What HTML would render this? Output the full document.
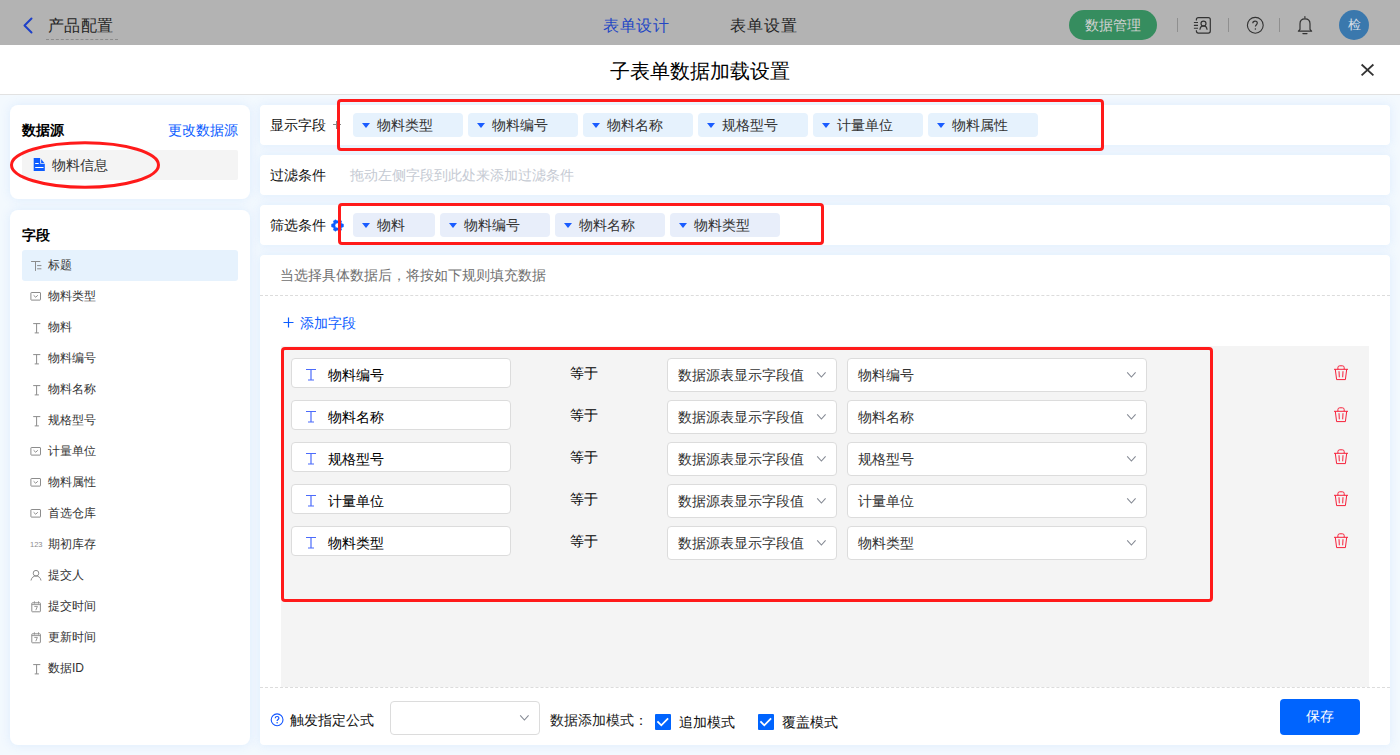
<!DOCTYPE html>
<html><head><meta charset="utf-8">
<style>
*{box-sizing:border-box;margin:0;padding:0}
html,body{width:1400px;height:755px;overflow:hidden}
body{font-family:"Liberation Sans",sans-serif;font-size:14px;color:#333;background:#f3f9fe;position:relative}
.a{position:absolute;white-space:nowrap}
.card{background:#fff;border-radius:8px;box-shadow:0 0 8px 1px rgba(222,236,254,0.9)}
.row{background:#fff;border-radius:4px;box-shadow:0 0 8px 1px rgba(222,236,254,0.9)}
.tag{position:absolute;height:24px;border-radius:4px;background:#e6f2fd;line-height:24px;font-size:14px;color:#333;white-space:nowrap}
.tag i{position:absolute;left:9px;top:10px;width:0;height:0;border-left:4px solid transparent;border-right:4px solid transparent;border-top:5px solid #1a5cff}
.tag span{position:absolute;left:24px;top:0}
.ftag{background:#e8eefa}
.red{position:absolute;border:3px solid #ff1a1a;border-radius:4px}
.box{position:absolute;background:#fff;border:1px solid #dcdcdc;border-radius:4px}
.t14{line-height:20px;font-size:14px}
.li{position:absolute;left:22px;width:216px;height:31px;font-size:12px;line-height:31px;color:#333}
.li svg{position:absolute;left:8px;top:10px}
.li .tx{position:absolute;left:26px;top:0}
</style></head><body>
<div class="a" style="left:0;top:0;width:1400px;height:45px;background:#b3b3b3"></div>
<svg class="a" style="left:22px;top:17px" width="12" height="17" viewBox="0 0 12 17"><path d="M9.5 1.5 L2.5 8.5 L9.5 15.5" fill="none" stroke="#1e40c8" stroke-width="2" stroke-linecap="round" stroke-linejoin="round"/></svg>
<div class="a" style="left:47.5px;top:14px;font-size:16px;line-height:24px;letter-spacing:0.6px;color:#262626">产品配置</div>
<div class="a" style="left:46px;top:39px;width:72px;border-top:1px dashed #8c8c8c"></div>
<div class="a" style="left:603px;top:14px;font-size:16px;line-height:24px;letter-spacing:0.6px;color:#2347c4">表单设计</div>
<div class="a" style="left:730px;top:14px;font-size:16px;line-height:24px;letter-spacing:0.9px;color:#262626">表单设置</div>
<div class="a" style="left:1069px;top:10px;width:88px;height:30px;border-radius:15px;background:#368d5f;color:#d2d2d2;font-size:14px;line-height:30px;text-align:center">数据管理</div>
<div class="a" style="left:1177px;top:18px;width:1px;height:14px;background:#8f8f8f"></div>
<div class="a" style="left:1228px;top:18px;width:1px;height:14px;background:#8f8f8f"></div>
<div class="a" style="left:1279px;top:18px;width:1px;height:14px;background:#8f8f8f"></div>
<svg class="a" style="left:1188px;top:12px" width="132" height="26" viewBox="0 0 132 26"><path d="M8.4 8.6V7.6Q8.4 5.6 10.4 5.6H20.3Q22.3 5.6 22.3 7.6V19.1Q22.3 21.1 20.3 21.1H10.4Q8.4 21.1 8.4 19.1V18.3" fill="none" stroke="#333" stroke-width="1.2"/><path d="M5.9 10.5H10M5.9 13.4H10M5.9 16.2H10" stroke="#333" stroke-width="1.1"/><circle cx="15.5" cy="11.6" r="2.5" fill="none" stroke="#333" stroke-width="1.2"/><path d="M11.9 17.8C12.2 15.2 13.6 13.9 15.5 13.9C17.4 13.9 18.8 15.2 19.1 17.8" fill="none" stroke="#333" stroke-width="1.2"/><circle cx="67.3" cy="13.3" r="7.9" fill="none" stroke="#333" stroke-width="1.1"/><path d="M64.8 11.3C64.8 9.9 65.8 9.1 67.1 9.1C68.4 9.1 69.3 10 69.3 11.1C69.3 12.6 67.4 12.9 67.4 14.6" fill="none" stroke="#333" stroke-width="1.2"/><circle cx="67.4" cy="16.9" r="0.75" fill="#333"/><path d="M110.4 19.2L112 17.4V11.8C112 8.8 114 6.9 117 6.9C120 6.9 122 8.8 122 11.8V17.4L123.6 19.2Z" fill="none" stroke="#333" stroke-width="1.2" stroke-linejoin="round"/><path d="M116.9 4.6V5.8M114.9 21.6H119" stroke="#333" stroke-width="1.2" stroke-linecap="round"/></svg>
<div class="a" style="left:1339px;top:10px;width:30px;height:30px;border-radius:15px;background:#3a78ad;color:#d6dde6;font-size:13px;line-height:30px;text-align:center">检</div>
<div class="a" style="left:0;top:45px;width:1400px;height:50px;background:#fff;border-bottom:1px solid #e2e2e2"></div>
<div class="a" style="left:610px;top:57px;font-size:20px;line-height:28px;color:#000">子表单数据加载设置</div>
<svg class="a" style="left:1359px;top:62px" width="17" height="16" viewBox="0 0 17 16"><path d="M2.6 2.5L14.4 13.4M14.4 2.5L2.6 13.4" stroke="#333" stroke-width="1.8"/></svg>
<div class="a card" style="left:10px;top:105px;width:240px;height:94px"></div>
<div class="a t14" style="left:22px;top:120px;font-weight:bold;color:#000">数据源</div>
<div class="a t14" style="left:168px;top:120px;color:#0b5cff">更改数据源</div>
<div class="a" style="left:22px;top:150px;width:216px;height:30px;background:#f4f4f4;border-radius:2px"></div>
<svg class="a" style="left:33px;top:157px" width="12" height="14" viewBox="0 0 12 14"><path d="M0.7 0.9H7.2V6.7H11.8V14H0.7Z" fill="#0d5cff"/><path d="M8.1 2L11.3 5.9H8.1Z" fill="#0d5cff"/><path d="M2.2 6.5H5.7M2.2 10.5H10.5" stroke="#fff" stroke-width="1.1"/></svg>
<div class="a t14" style="left:52px;top:155px;color:#333">物料信息</div>
<div class="a card" style="left:10px;top:210px;width:240px;height:535px"></div>
<div class="a t14" style="left:22px;top:225px;font-weight:bold;color:#000">字段</div>
<div class="a" style="left:22px;top:250px;width:216px;height:31px;background:#e6f2fd;border-radius:3px"></div>
<div class="li" style="top:250px"><svg width="13" height="12" viewBox="0 0 13 12"><path d="M1.1 1.5H10.3M5.5 1.5V10.9M7.1 5.6H11.4M7.1 8.8H11.4" stroke="#8c8c8c" stroke-width="1" fill="none"/></svg><span class="tx">标题</span></div>
<div class="li" style="top:281px"><svg width="12" height="12" viewBox="0 0 12 12"><rect x="0.9" y="1.5" width="9.6" height="7.6" rx="0.5" stroke="#8c8c8c" stroke-width="1" fill="none"/><path d="M3.6 4.3L5.7 6.2L7.8 4.3" stroke="#8c8c8c" stroke-width="1" fill="none"/></svg><span class="tx">物料类型</span></div>
<div class="li" style="top:312px"><svg width="12" height="12" viewBox="0 0 12 12"><path d="M3.2 1.6H10.3M6.6 1.6V10.9M4.7 10.9H8.9" stroke="#8c8c8c" stroke-width="1" fill="none"/></svg><span class="tx">物料</span></div>
<div class="li" style="top:343px"><svg width="12" height="12" viewBox="0 0 12 12"><path d="M3.2 1.6H10.3M6.6 1.6V10.9M4.7 10.9H8.9" stroke="#8c8c8c" stroke-width="1" fill="none"/></svg><span class="tx">物料编号</span></div>
<div class="li" style="top:374px"><svg width="12" height="12" viewBox="0 0 12 12"><path d="M3.2 1.6H10.3M6.6 1.6V10.9M4.7 10.9H8.9" stroke="#8c8c8c" stroke-width="1" fill="none"/></svg><span class="tx">物料名称</span></div>
<div class="li" style="top:405px"><svg width="12" height="12" viewBox="0 0 12 12"><path d="M3.2 1.6H10.3M6.6 1.6V10.9M4.7 10.9H8.9" stroke="#8c8c8c" stroke-width="1" fill="none"/></svg><span class="tx">规格型号</span></div>
<div class="li" style="top:436px"><svg width="12" height="12" viewBox="0 0 12 12"><rect x="0.9" y="1.5" width="9.6" height="7.6" rx="0.5" stroke="#8c8c8c" stroke-width="1" fill="none"/><path d="M3.6 4.3L5.7 6.2L7.8 4.3" stroke="#8c8c8c" stroke-width="1" fill="none"/></svg><span class="tx">计量单位</span></div>
<div class="li" style="top:467px"><svg width="12" height="12" viewBox="0 0 12 12"><rect x="0.9" y="1.5" width="9.6" height="7.6" rx="0.5" stroke="#8c8c8c" stroke-width="1" fill="none"/><path d="M3.6 4.3L5.7 6.2L7.8 4.3" stroke="#8c8c8c" stroke-width="1" fill="none"/></svg><span class="tx">物料属性</span></div>
<div class="li" style="top:498px"><svg width="12" height="12" viewBox="0 0 12 12"><rect x="0.9" y="1.5" width="9.6" height="7.6" rx="0.5" stroke="#8c8c8c" stroke-width="1" fill="none"/><path d="M3.6 4.3L5.7 6.2L7.8 4.3" stroke="#8c8c8c" stroke-width="1" fill="none"/></svg><span class="tx">首选仓库</span></div>
<div class="li" style="top:529px"><svg width="14" height="12" viewBox="0 0 14 12"><text x="0" y="8" font-size="7.5" font-family="Liberation Sans" fill="#8c8c8c">123</text></svg><span class="tx">期初库存</span></div>
<div class="li" style="top:560px"><svg width="12" height="12" viewBox="0 0 12 12"><circle cx="6" cy="3.2" r="2.8" stroke="#8c8c8c" stroke-width="1" fill="none"/><path d="M1 10.5c0.5-3 2.5-4.5 5-4.5s4.5 1.5 5 4.5" stroke="#8c8c8c" stroke-width="1" fill="none"/></svg><span class="tx">提交人</span></div>
<div class="li" style="top:591px"><svg width="12" height="12" viewBox="0 0 12 12"><rect x="1.8" y="1.8" width="8.6" height="9" rx="0.6" stroke="#8c8c8c" stroke-width="1" fill="none"/><path d="M1.8 3.6H10.4M4.4 0.3V2.6M8.5 0.3V2.6M4.3 5.4H7.4L5.8 9.2" stroke="#8c8c8c" stroke-width="0.9" fill="none"/></svg><span class="tx">提交时间</span></div>
<div class="li" style="top:622px"><svg width="12" height="12" viewBox="0 0 12 12"><rect x="1.8" y="1.8" width="8.6" height="9" rx="0.6" stroke="#8c8c8c" stroke-width="1" fill="none"/><path d="M1.8 3.6H10.4M4.4 0.3V2.6M8.5 0.3V2.6M4.3 5.4H7.4L5.8 9.2" stroke="#8c8c8c" stroke-width="0.9" fill="none"/></svg><span class="tx">更新时间</span></div>
<div class="li" style="top:653px"><svg width="12" height="12" viewBox="0 0 12 12"><path d="M3.2 1.6H10.3M6.6 1.6V10.9M4.7 10.9H8.9" stroke="#8c8c8c" stroke-width="1" fill="none"/></svg><span class="tx">数据ID</span></div>
<div class="a row" style="left:260px;top:105px;width:1130px;height:40px"></div>
<div class="a row" style="left:260px;top:155px;width:1130px;height:40px"></div>
<div class="a row" style="left:260px;top:205px;width:1130px;height:40px"></div>
<div class="a t14" style="left:270px;top:115px;color:#111">显示字段</div>
<div class="a" style="left:333px;top:124px;width:8px;height:1px;background:#888"></div>
<div class="a" style="left:336px;top:121px;width:1px;height:8px;background:#888"></div>
<div class="a t14" style="left:270px;top:165px;color:#111">过滤条件</div>
<div class="a t14" style="left:350px;top:165px;color:#c5cad3">拖动左侧字段到此处来添加过滤条件</div>
<div class="a t14" style="left:270px;top:215px;color:#111">筛选条件</div>
<svg class="a" style="left:330.2px;top:217.6px" width="15" height="15" viewBox="0 0 15 15"><path d="M13.44 6.13L13.44 8.87L11.86 9.26L11.20 10.39L11.66 11.96L9.28 13.33L8.15 12.15L6.85 12.15L5.72 13.33L3.34 11.96L3.80 10.39L3.14 9.26L1.56 8.87L1.56 6.13L3.14 5.74L3.80 4.61L3.34 3.04L5.72 1.67L6.85 2.85L8.15 2.85L9.28 1.67L11.66 3.04L11.20 4.61L11.86 5.74ZM10.00 7.5A2.5 2.5 0 1 0 5.00 7.5A2.5 2.5 0 1 0 10.00 7.5Z" fill="#0d5cff" fill-rule="evenodd" stroke="#0d5cff" stroke-width="0.5" stroke-linejoin="round"/></svg>
<div class="tag" style="left:353px;top:113px;width:110px"><i></i><span>物料类型</span></div>
<div class="tag" style="left:468px;top:113px;width:110px"><i></i><span>物料编号</span></div>
<div class="tag" style="left:583px;top:113px;width:110px"><i></i><span>物料名称</span></div>
<div class="tag" style="left:698px;top:113px;width:110px"><i></i><span>规格型号</span></div>
<div class="tag" style="left:813px;top:113px;width:110px"><i></i><span>计量单位</span></div>
<div class="tag" style="left:928px;top:113px;width:110px"><i></i><span>物料属性</span></div>
<div class="tag ftag" style="left:353px;top:213px;width:82px"><i></i><span>物料</span></div>
<div class="tag ftag" style="left:440px;top:213px;width:110px"><i></i><span>物料编号</span></div>
<div class="tag ftag" style="left:555px;top:213px;width:110px"><i></i><span>物料名称</span></div>
<div class="tag ftag" style="left:670px;top:213px;width:110px"><i></i><span>物料类型</span></div>
<div class="a card" style="left:260px;top:255px;width:1130px;height:490px;border-radius:4px"></div>
<div class="a t14" style="left:280px;top:265px;color:#707070">当选择具体数据后，将按如下规则填充数据</div>
<div class="a" style="left:260px;top:295px;width:1130px;border-top:1px dashed #dcdcdc"></div>
<svg class="a" style="left:283px;top:317px" width="11" height="11" viewBox="0 0 11 11"><path d="M5.5 0.5v10M0.5 5.5h10" stroke="#0b5cff" stroke-width="1.2"/></svg>
<div class="a t14" style="left:300px;top:313px;color:#0b5cff">添加字段</div>
<div class="a" style="left:281px;top:346px;width:1088px;height:341px;background:#f4f4f4"></div>
<div class="a" style="left:260px;top:687px;width:1130px;border-top:1px dashed #dcdcdc"></div>
<div class="box" style="left:291px;top:358px;width:220px;height:30px"></div>
<svg class="a" style="left:305px;top:368px" width="12" height="13" viewBox="0 0 12 13"><path d="M1 1.5h10M6 1.5v10.5M3 12h6" stroke="#4b6bfb" stroke-width="1.2" fill="none"/></svg>
<div class="a t14" style="left:328px;top:365px;color:#000">物料编号</div>
<div class="a t14" style="left:570px;top:363px;color:#000">等于</div>
<div class="box" style="left:667px;top:358px;width:170px;height:34px"></div>
<div class="a t14" style="left:678px;top:365px;color:#333">数据源表显示字段值</div>
<svg class="a" style="left:816px;top:371px" width="11" height="7" viewBox="0 0 11 7"><path d="M1.2 1.3L5.4 6L9.6 1.3" stroke="#858a94" stroke-width="1.1" fill="none"/></svg>
<div class="box" style="left:847px;top:358px;width:300px;height:34px"></div>
<div class="a t14" style="left:858px;top:365px;color:#333">物料编号</div>
<svg class="a" style="left:1126px;top:371px" width="11" height="7" viewBox="0 0 11 7"><path d="M1.2 1.3L5.4 6L9.6 1.3" stroke="#858a94" stroke-width="1.1" fill="none"/></svg>
<svg class="a" style="left:1334px;top:365px" width="15" height="16" viewBox="0 0 15 16"><path d="M0 4.3H14M3.9 4.3V2.6Q3.9 0.8 5.7 0.8H8.4Q10.2 0.8 10.2 2.6V4.3M1.3 4.3L2.6 14.6H11.4L12.7 4.3M5 6.2L5.3 12.3M9 6.2L8.7 12.3" stroke="#f7203a" stroke-width="1" fill="none"/></svg>
<div class="box" style="left:291px;top:400px;width:220px;height:30px"></div>
<svg class="a" style="left:305px;top:410px" width="12" height="13" viewBox="0 0 12 13"><path d="M1 1.5h10M6 1.5v10.5M3 12h6" stroke="#4b6bfb" stroke-width="1.2" fill="none"/></svg>
<div class="a t14" style="left:328px;top:407px;color:#000">物料名称</div>
<div class="a t14" style="left:570px;top:405px;color:#000">等于</div>
<div class="box" style="left:667px;top:400px;width:170px;height:34px"></div>
<div class="a t14" style="left:678px;top:407px;color:#333">数据源表显示字段值</div>
<svg class="a" style="left:816px;top:413px" width="11" height="7" viewBox="0 0 11 7"><path d="M1.2 1.3L5.4 6L9.6 1.3" stroke="#858a94" stroke-width="1.1" fill="none"/></svg>
<div class="box" style="left:847px;top:400px;width:300px;height:34px"></div>
<div class="a t14" style="left:858px;top:407px;color:#333">物料名称</div>
<svg class="a" style="left:1126px;top:413px" width="11" height="7" viewBox="0 0 11 7"><path d="M1.2 1.3L5.4 6L9.6 1.3" stroke="#858a94" stroke-width="1.1" fill="none"/></svg>
<svg class="a" style="left:1334px;top:407px" width="15" height="16" viewBox="0 0 15 16"><path d="M0 4.3H14M3.9 4.3V2.6Q3.9 0.8 5.7 0.8H8.4Q10.2 0.8 10.2 2.6V4.3M1.3 4.3L2.6 14.6H11.4L12.7 4.3M5 6.2L5.3 12.3M9 6.2L8.7 12.3" stroke="#f7203a" stroke-width="1" fill="none"/></svg>
<div class="box" style="left:291px;top:442px;width:220px;height:30px"></div>
<svg class="a" style="left:305px;top:452px" width="12" height="13" viewBox="0 0 12 13"><path d="M1 1.5h10M6 1.5v10.5M3 12h6" stroke="#4b6bfb" stroke-width="1.2" fill="none"/></svg>
<div class="a t14" style="left:328px;top:449px;color:#000">规格型号</div>
<div class="a t14" style="left:570px;top:447px;color:#000">等于</div>
<div class="box" style="left:667px;top:442px;width:170px;height:34px"></div>
<div class="a t14" style="left:678px;top:449px;color:#333">数据源表显示字段值</div>
<svg class="a" style="left:816px;top:455px" width="11" height="7" viewBox="0 0 11 7"><path d="M1.2 1.3L5.4 6L9.6 1.3" stroke="#858a94" stroke-width="1.1" fill="none"/></svg>
<div class="box" style="left:847px;top:442px;width:300px;height:34px"></div>
<div class="a t14" style="left:858px;top:449px;color:#333">规格型号</div>
<svg class="a" style="left:1126px;top:455px" width="11" height="7" viewBox="0 0 11 7"><path d="M1.2 1.3L5.4 6L9.6 1.3" stroke="#858a94" stroke-width="1.1" fill="none"/></svg>
<svg class="a" style="left:1334px;top:449px" width="15" height="16" viewBox="0 0 15 16"><path d="M0 4.3H14M3.9 4.3V2.6Q3.9 0.8 5.7 0.8H8.4Q10.2 0.8 10.2 2.6V4.3M1.3 4.3L2.6 14.6H11.4L12.7 4.3M5 6.2L5.3 12.3M9 6.2L8.7 12.3" stroke="#f7203a" stroke-width="1" fill="none"/></svg>
<div class="box" style="left:291px;top:484px;width:220px;height:30px"></div>
<svg class="a" style="left:305px;top:494px" width="12" height="13" viewBox="0 0 12 13"><path d="M1 1.5h10M6 1.5v10.5M3 12h6" stroke="#4b6bfb" stroke-width="1.2" fill="none"/></svg>
<div class="a t14" style="left:328px;top:491px;color:#000">计量单位</div>
<div class="a t14" style="left:570px;top:489px;color:#000">等于</div>
<div class="box" style="left:667px;top:484px;width:170px;height:34px"></div>
<div class="a t14" style="left:678px;top:491px;color:#333">数据源表显示字段值</div>
<svg class="a" style="left:816px;top:497px" width="11" height="7" viewBox="0 0 11 7"><path d="M1.2 1.3L5.4 6L9.6 1.3" stroke="#858a94" stroke-width="1.1" fill="none"/></svg>
<div class="box" style="left:847px;top:484px;width:300px;height:34px"></div>
<div class="a t14" style="left:858px;top:491px;color:#333">计量单位</div>
<svg class="a" style="left:1126px;top:497px" width="11" height="7" viewBox="0 0 11 7"><path d="M1.2 1.3L5.4 6L9.6 1.3" stroke="#858a94" stroke-width="1.1" fill="none"/></svg>
<svg class="a" style="left:1334px;top:491px" width="15" height="16" viewBox="0 0 15 16"><path d="M0 4.3H14M3.9 4.3V2.6Q3.9 0.8 5.7 0.8H8.4Q10.2 0.8 10.2 2.6V4.3M1.3 4.3L2.6 14.6H11.4L12.7 4.3M5 6.2L5.3 12.3M9 6.2L8.7 12.3" stroke="#f7203a" stroke-width="1" fill="none"/></svg>
<div class="box" style="left:291px;top:526px;width:220px;height:30px"></div>
<svg class="a" style="left:305px;top:536px" width="12" height="13" viewBox="0 0 12 13"><path d="M1 1.5h10M6 1.5v10.5M3 12h6" stroke="#4b6bfb" stroke-width="1.2" fill="none"/></svg>
<div class="a t14" style="left:328px;top:533px;color:#000">物料类型</div>
<div class="a t14" style="left:570px;top:531px;color:#000">等于</div>
<div class="box" style="left:667px;top:526px;width:170px;height:34px"></div>
<div class="a t14" style="left:678px;top:533px;color:#333">数据源表显示字段值</div>
<svg class="a" style="left:816px;top:539px" width="11" height="7" viewBox="0 0 11 7"><path d="M1.2 1.3L5.4 6L9.6 1.3" stroke="#858a94" stroke-width="1.1" fill="none"/></svg>
<div class="box" style="left:847px;top:526px;width:300px;height:34px"></div>
<div class="a t14" style="left:858px;top:533px;color:#333">物料类型</div>
<svg class="a" style="left:1126px;top:539px" width="11" height="7" viewBox="0 0 11 7"><path d="M1.2 1.3L5.4 6L9.6 1.3" stroke="#858a94" stroke-width="1.1" fill="none"/></svg>
<svg class="a" style="left:1334px;top:533px" width="15" height="16" viewBox="0 0 15 16"><path d="M0 4.3H14M3.9 4.3V2.6Q3.9 0.8 5.7 0.8H8.4Q10.2 0.8 10.2 2.6V4.3M1.3 4.3L2.6 14.6H11.4L12.7 4.3M5 6.2L5.3 12.3M9 6.2L8.7 12.3" stroke="#f7203a" stroke-width="1" fill="none"/></svg>
<svg class="a" style="left:270px;top:712.5px" width="15" height="15" viewBox="0 0 15 15"><circle cx="7.1" cy="6.8" r="5.9" stroke="#1256ff" stroke-width="1.1" fill="none"/><path d="M5.2 5.3C5.2 4.2 6 3.5 7.1 3.5C8.2 3.5 8.9 4.2 8.9 5.1C8.9 6.4 7.1 6.5 7.1 8" stroke="#1256ff" stroke-width="1.2" fill="none"/><circle cx="7.1" cy="9.7" r="0.75" fill="#1256ff"/></svg>
<div class="a t14" style="left:290px;top:710px;color:#111">触发指定公式</div>
<div class="box" style="left:390px;top:701px;width:150px;height:34px"></div>
<svg class="a" style="left:519px;top:714px" width="11" height="7" viewBox="0 0 11 7"><path d="M1.2 1.3L5.4 6L9.6 1.3" stroke="#858a94" stroke-width="1.1" fill="none"/></svg>
<div class="a t14" style="left:550px;top:710px;color:#222">数据添加模式：</div>
<div class="a" style="left:655px;top:714px;width:16px;height:16px;background:#0064fe;border-radius:1px"></div><svg class="a" style="left:655px;top:714px" width="16" height="16" viewBox="0 0 16 16"><path d="M2.4 7.3L6.3 11.3L13.1 4.3" stroke="#fff" stroke-width="1.8" fill="none"/></svg>
<div class="a t14" style="left:679px;top:712px;color:#111">追加模式</div>
<div class="a" style="left:758px;top:714px;width:16px;height:16px;background:#0064fe;border-radius:1px"></div><svg class="a" style="left:758px;top:714px" width="16" height="16" viewBox="0 0 16 16"><path d="M2.4 7.3L6.3 11.3L13.1 4.3" stroke="#fff" stroke-width="1.8" fill="none"/></svg>
<div class="a t14" style="left:782px;top:712px;color:#111">覆盖模式</div>
<div class="a" style="left:1280px;top:699px;width:80px;height:36px;background:#0064fe;border-radius:4px;color:#fff;font-size:14px;line-height:34px;text-align:center">保存</div>
<div class="red" style="left:337px;top:99px;width:767px;height:52px"></div>
<div class="red" style="left:338px;top:203px;width:486px;height:42px"></div>
<div class="red" style="left:281px;top:347px;width:932px;height:255px"></div>
<svg class="a" style="left:0;top:130px" width="170" height="70" viewBox="0 0 170 70"><ellipse cx="85" cy="35" rx="73.5" ry="22.3" fill="none" stroke="#ff1a1a" stroke-width="3"/></svg>
</body></html>
